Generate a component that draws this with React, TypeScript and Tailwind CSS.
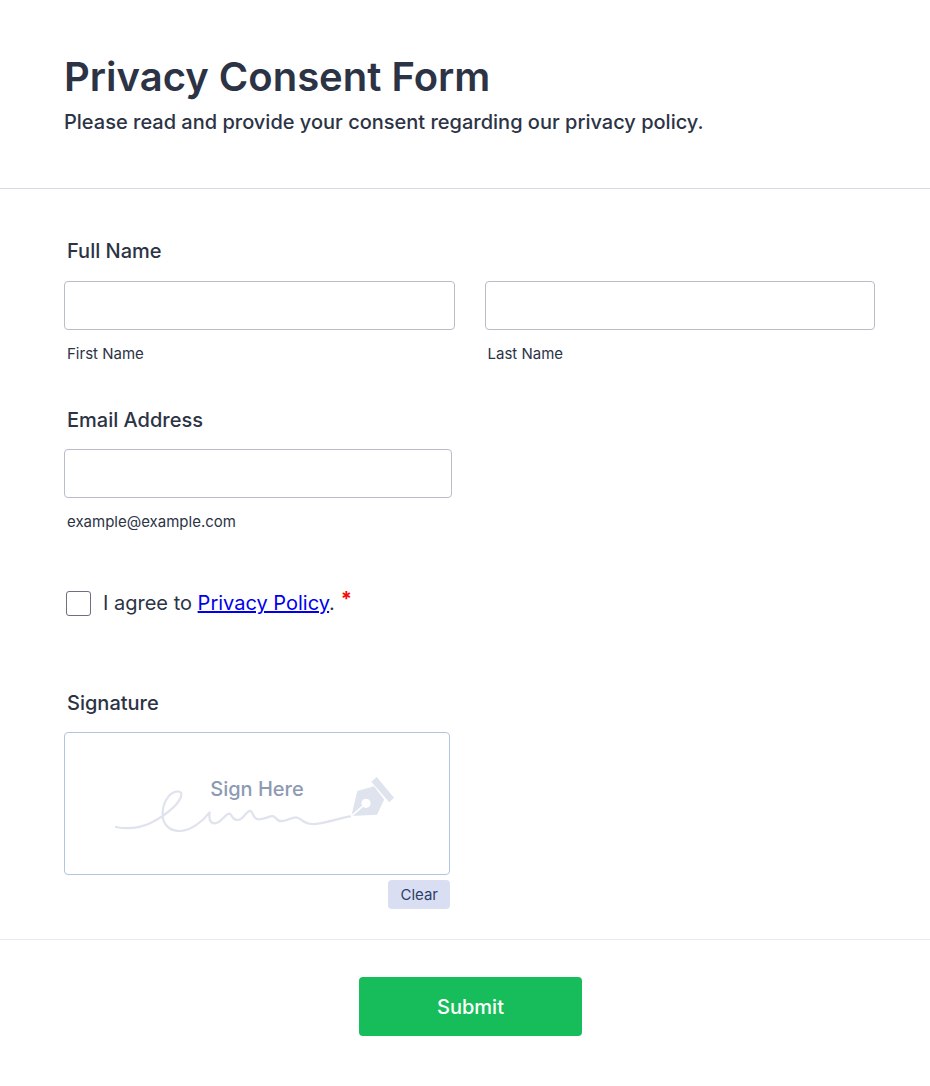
import { FormEvent, useState } from "react";

function SignatureArt() {
  return (
    <svg width="284" height="56" viewBox="0 0 284 56" fill="none" aria-hidden="true">
      <path
        d="M.6 51C13 53.4 24 52.5 35 47.3C50 40 66 27 66.4 18.5C66.5 15.5 63.5 15.2 60.5 15.7C53 17.5 47.6 28 47.6 38C47.6 49 55 55 64.5 55C76 55 88 45 94.6 36.3C94 42 94.2 47 99.5 47.3C106 47.5 110 37.8 114.3 37.6C117 37.6 116.5 44 122.500 44C128.5 44 131 35 135 34.8C138.5 34.8 137 43.3 144 43.3C149.5 43.3 153.5 40.2 157.7 40.2C161.5 40.2 160.5 45.2 166.5 45.2C171.5 45.2 176 41.3 181 41.3C185.5 41.3 187.5 48 197.5 48.1C207 48.2 222 42.8 235 40.3"
        stroke="#dfe3ed"
        strokeWidth="2.2"
        strokeLinecap="round"
        strokeLinejoin="round"
      />
      <path d="M236.3 40L242.3 15L259 10.3L269.2 23.5L262 38.7Z" fill="#dfe3ed" />
      <path d="M236 40.3L251 27.3" stroke="#fff" strokeWidth="1.6" />
      <circle cx="251" cy="27.3" r="4.6" fill="#fff" />
      <path d="M256.3 5.7L261.7 1L279 21.7L274.3 26.3Z" fill="#dfe3ed" />
    </svg>
  );
}

type FieldProps = {
  id: string;
  type?: string;
  hint: string;
};

function Field({ id, type = "text", hint }: FieldProps) {
  return (
    <div className="flex flex-col">
      <input
        id={id}
        name={id}
        type={type}
        className="h-[49px] w-full rounded border border-[#b8bdc9] bg-white px-3 text-base"
      />
      <label htmlFor={id} className="mt-3.5 pl-[3px] text-[15px] leading-5">
        {hint}
      </label>
    </div>
  );
}

export default function App() {
  const [agreed, setAgreed] = useState(false);

  function onSubmit(e: FormEvent) {
    e.preventDefault();
  }

  return (
    <form
      onSubmit={onSubmit}
      className="min-h-screen bg-white font-['Inter',sans-serif] text-[#2c3345]"
    >
      <header className="border-b border-[#d7d8e6] pt-[51px] pr-[55px] pb-[54px] pl-16">
        <h1 className="text-[40px] leading-[52px] font-semibold">Privacy Consent Form</h1>
        <p className="mt-[7px] text-xl leading-6 font-medium">
          Please read and provide your consent regarding our privacy policy.
        </p>
      </header>

      <div className="pt-[50px] pr-[55px] pb-[30px] pl-16">
        <fieldset>
          <legend className="pl-[3px] text-xl leading-6 font-medium">Full Name</legend>
          <div className="mt-[18px] grid grid-cols-2 gap-[30px]">
            <Field id="first-name" hint="First Name" />
            <Field id="last-name" hint="Last Name" />
          </div>
        </fieldset>

        <fieldset className="mt-11 max-w-[388px]">
          <legend className="pl-[3px] text-xl leading-6 font-medium">Email Address</legend>
          <div className="mt-[17px]">
            <Field id="email" type="email" hint="example@example.com" />
          </div>
        </fieldset>

        <div className="mt-[59px] flex items-start pl-[2px]">
          <input
            id="agree"
            type="checkbox"
            checked={agreed}
            onChange={(e) => setAgreed(e.target.checked)}
            className="size-[25px] appearance-none rounded-[3px] border border-[#6c7080] bg-white checked:bg-[#2c3345]"
          />
          <label htmlFor="agree" className="pl-3 text-xl leading-6">
            I agree to{" "}
            <a href="#privacy-policy" className="text-[#0000ee] underline">
              Privacy Policy
            </a>
            .
          </label>
          <span className="ml-1.5 text-xl leading-4 font-bold text-[#f60b0b]">*</span>
        </div>

        <section className="mt-[75px] max-w-[386px]" aria-labelledby="signature">
          <h2 id="signature" className="pl-[3px] text-xl leading-6 font-medium">
            Signature
          </h2>
          <div className="mt-[17px] flex h-[143px] items-center justify-center rounded border border-[#b3c4e3] bg-white">
            <div className="relative">
              <SignatureArt />
              <span className="absolute inset-x-0 top-0 text-center text-xl leading-[26px] font-medium text-[#8d9ab3]">
                Sign Here
              </span>
            </div>
          </div>
          <div className="mt-[5px] flex justify-end">
            <button
              type="button"
              className="h-[29px] rounded bg-[#dadef3] px-3 text-[15px] leading-5 text-[#2c3e69]"
            >
              Clear
            </button>
          </div>
        </section>
      </div>

      <footer className="flex justify-center border-t border-[#e8eaf2] pt-[37px] pr-[55px] pb-[50px] pl-[66px]">
        <button
          type="submit"
          className="h-[59px] w-[223px] rounded bg-[#18bd5b] text-xl font-medium text-white"
        >
          Submit
        </button>
      </footer>
    </form>
  );
}
